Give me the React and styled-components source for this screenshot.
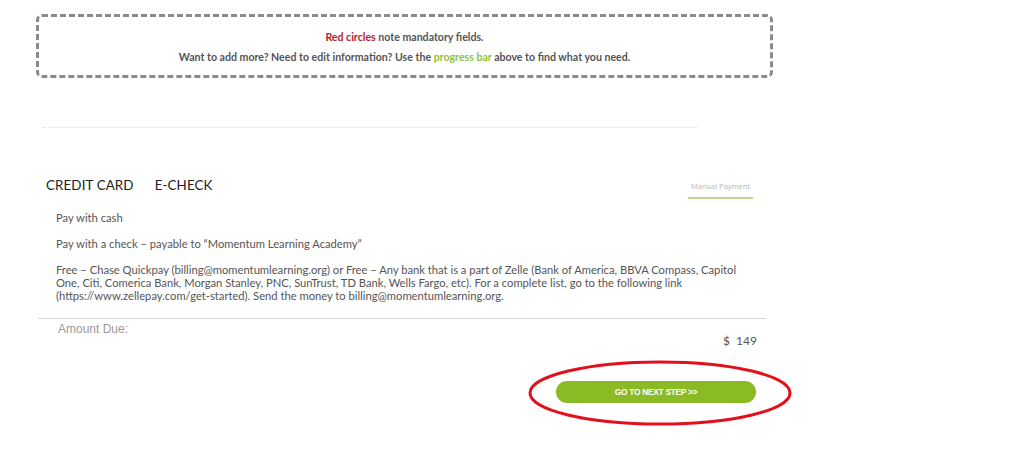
import styled, { createGlobalStyle } from 'styled-components';

const GlobalStyle = createGlobalStyle`
  body {
    margin: 0;
    background: #ffffff;
    font-family: Lato, "Open Sans", sans-serif;
  }
`;

const App = () => {
  return (
    <StPage>
      <GlobalStyle />
      <StNotice>
        <StNoticeLine>
          <StRed>Red circles</StRed> note mandatory fields.
        </StNoticeLine>
        <StNoticeLine>
          Want to add more? Need to edit information? Use the <StGreen>progress bar</StGreen> above to find what you need.
        </StNoticeLine>
      </StNotice>

      <StDivider />

      <StPayment>
        <StTabs>
          <StTab>CREDIT CARD</StTab>
          <StTab>E-CHECK</StTab>
          <StManualTab>Manual Payment</StManualTab>
        </StTabs>

        <StBody>
          <StParagraph>Pay with cash</StParagraph>
          <StParagraph>Pay with a check – payable to “Momentum Learning Academy”</StParagraph>
          <StParagraph>
            Free – Chase Quickpay (billing@momentumlearning.org) or Free – Any bank that is a part of Zelle (Bank of America, BBVA Compass, Capitol
            One, Citi, Comerica Bank, Morgan Stanley, PNC, SunTrust, TD Bank, Wells Fargo, etc). For a complete list, go to the following link
            (https://www.zellepay.com/get-started). Send the money to billing@momentumlearning.org.
          </StParagraph>
        </StBody>

        <StAmountRow>
          <StAmountLabel>Amount Due:</StAmountLabel>
          <StAmountValue>$&nbsp;&nbsp;149</StAmountValue>
        </StAmountRow>

        <StActions>
          <StButtonWrap>
            <StNextButton type="button">GO TO NEXT STEP &gt;&gt;</StNextButton>
            <StCircle viewBox="0 0 264 66" aria-hidden="true">
              <ellipse cx="132" cy="33" rx="130" ry="31" fill="none" stroke="#e3101c" strokeWidth="3" />
            </StCircle>
          </StButtonWrap>
        </StActions>
      </StPayment>
    </StPage>
  );
};

export default App;

const StPage = styled.div`
  padding: 14px 0 60px 36px;
  width: 800px;
`;

const StNotice = styled.div`
  box-sizing: border-box;
  width: 737px;
  height: 64px;
  border: 3px dashed #8a8a8a;
  border-radius: 6px;
  display: flex;
  flex-direction: column;
  align-items: center;
  justify-content: center;
  gap: 7px;
  padding-top: 2px;
`;

const StNoticeLine = styled.p`
  margin: 0;
  font-size: 10.6px;
  font-weight: 700;
  line-height: 13px;
  color: #555555;
`;

const StRed = styled.span`
  color: #b3252b;
`;

const StGreen = styled.span`
  color: #8cc63f;
`;

const StDivider = styled.hr`
  margin: 49px 0 0 7px;
  width: 654px;
  border: 0;
  border-top: 1px dotted #dddddd;
`;

const StPayment = styled.section`
  margin: 48px 0 0 2px;
  width: 728px;
`;

const StTabs = styled.div`
  display: flex;
  align-items: center;
  padding: 0 13px 0 8px;
  height: 18px;
`;

const StTab = styled.span`
  font-size: 13.4px;
  color: #222222;
  margin-right: 21px;
  letter-spacing: 0.1px;
`;

const StManualTab = styled.span`
  margin-left: auto;
  font-family: "Open Sans", sans-serif;
  font-size: 7.5px;
  color: #b8b8b8;
  width: 65px;
  text-align: center;
  padding: 4px 0 6px;
  margin-top: 6px;
  border-bottom: 2px solid #b8dc8c;
`;

const StBody = styled.div`
  padding: 17px 18px 0 18px;
`;

const StParagraph = styled.p`
  margin: 0 0 13px;
  font-size: 11.2px;
  line-height: 13px;
  color: #555555;

  &:last-child {
    margin-bottom: 0;
  }
`;

const StAmountRow = styled.div`
  border-top: 1px solid #d4d4d4;
  margin-top: 16px;
  padding: 3px 9px 0 20px;
  display: flex;
  flex-direction: column;
`;

const StAmountLabel = styled.span`
  font-family: "Liberation Sans", Arial, sans-serif;
  font-size: 12px;
  line-height: 14px;
  color: #9a9a9a;
`;

const StAmountValue = styled.span`
  align-self: flex-end;
  font-size: 12px;
  line-height: 14px;
  color: #555555;
  margin-top: -2px;
`;

const StActions = styled.div`
  display: flex;
  justify-content: flex-end;
  padding: 33px 10px 0 0;
`;

const StButtonWrap = styled.div`
  position: relative;
  display: flex;
`;

const StNextButton = styled.button`
  width: 200px;
  height: 22px;
  border: 0;
  border-radius: 11px;
  background: #8aba24;
  color: #ffffff;
  font-family: "Liberation Sans", Arial, sans-serif;
  font-weight: 700;
  font-size: 8.4px;
  letter-spacing: -0.3px;
  cursor: pointer;
`;

const StCircle = styled.svg`
  position: absolute;
  left: -28px;
  top: -21px;
  width: 264px;
  height: 66px;
  pointer-events: none;
  overflow: visible;
`;
